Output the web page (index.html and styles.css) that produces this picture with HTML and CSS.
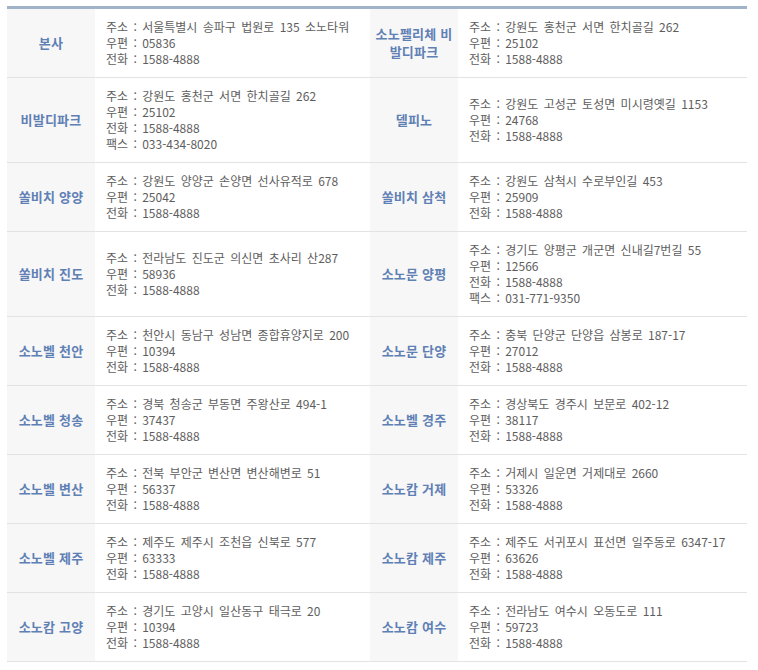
FILE: index.html
```html
<!DOCTYPE html>
<html lang="ko">
<head>
<meta charset="utf-8">
<title>사업장 안내</title>
<link rel="stylesheet" href="styles.css">
</head>
<body>
<div class="wrap">
<table class="sites">
  <colgroup>
    <col class="c-label"><col class="c-info1"><col class="c-label"><col class="c-info2">
  </colgroup>
  <tbody>
    <tr>
      <th>본사</th>
      <td>주소 : 서울특별시 송파구 법원로 135 소노타워<br>우편 : 05836<br>전화 : 1588-4888</td>
      <th>소노펠리체 비발디파크</th>
      <td>주소 : 강원도 홍천군 서면 한치골길 262<br>우편 : 25102<br>전화 : 1588-4888</td>
    </tr>
    <tr>
      <th>비발디파크</th>
      <td>주소 : 강원도 홍천군 서면 한치골길 262<br>우편 : 25102<br>전화 : 1588-4888<br>팩스 : 033-434-8020</td>
      <th>델피노</th>
      <td>주소 : 강원도 고성군 토성면 미시령옛길 1153<br>우편 : 24768<br>전화 : 1588-4888</td>
    </tr>
    <tr>
      <th>쏠비치 양양</th>
      <td>주소 : 강원도 양양군 손양면 선사유적로 678<br>우편 : 25042<br>전화 : 1588-4888</td>
      <th>쏠비치 삼척</th>
      <td>주소 : 강원도 삼척시 수로부인길 453<br>우편 : 25909<br>전화 : 1588-4888</td>
    </tr>
    <tr>
      <th>쏠비치 진도</th>
      <td>주소 : 전라남도 진도군 의신면 초사리 산287<br>우편 : 58936<br>전화 : 1588-4888</td>
      <th>소노문 양평</th>
      <td>주소 : 경기도 양평군 개군면 신내길7번길 55<br>우편 : 12566<br>전화 : 1588-4888<br>팩스 : 031-771-9350</td>
    </tr>
    <tr>
      <th>소노벨 천안</th>
      <td>주소 : 천안시 동남구 성남면 종합휴양지로 200<br>우편 : 10394<br>전화 : 1588-4888</td>
      <th>소노문 단양</th>
      <td>주소 : 충북 단양군 단양읍 삼봉로 187-17<br>우편 : 27012<br>전화 : 1588-4888</td>
    </tr>
    <tr>
      <th>소노벨 청송</th>
      <td>주소 : 경북 청송군 부동면 주왕산로 494-1<br>우편 : 37437<br>전화 : 1588-4888</td>
      <th>소노벨 경주</th>
      <td>주소 : 경상북도 경주시 보문로 402-12<br>우편 : 38117<br>전화 : 1588-4888</td>
    </tr>
    <tr>
      <th>소노벨 변산</th>
      <td>주소 : 전북 부안군 변산면 변산해변로 51<br>우편 : 56337<br>전화 : 1588-4888</td>
      <th>소노캄 거제</th>
      <td>주소 : 거제시 일운면 거제대로 2660<br>우편 : 53326<br>전화 : 1588-4888</td>
    </tr>
    <tr>
      <th>소노벨 제주</th>
      <td>주소 : 제주도 제주시 조천읍 신북로 577<br>우편 : 63333<br>전화 : 1588-4888</td>
      <th>소노캄 제주</th>
      <td>주소 : 제주도 서귀포시 표선면 일주동로 6347-17<br>우편 : 63626<br>전화 : 1588-4888</td>
    </tr>
    <tr>
      <th>소노캄 고양</th>
      <td>주소 : 경기도 고양시 일산동구 태극로 20<br>우편 : 10394<br>전화 : 1588-4888</td>
      <th>소노캄 여수</th>
      <td>주소 : 전라남도 여수시 오동도로 111<br>우편 : 59723<br>전화 : 1588-4888</td>
    </tr>
  </tbody>
</table>
</div>
</body>
</html>
```
FILE: styles.css
```css
html, body {
  margin: 0;
  padding: 0;
  background: #ffffff;
}
.wrap {
  padding: 6px 11px 0 7px;
}
.sites {
  width: 740px;
  border-collapse: collapse;
  border-top: 3px solid #a0b3c9;
  table-layout: fixed;
  font-family: "Noto Sans CJK KR", "Noto Sans", sans-serif;
}
.c-label { width: 88px; }
.c-info1 { width: 275px; }
.c-info2 { width: 289px; }
.sites th,
.sites td {
  border-bottom: 1px solid #e3e3e3;
  vertical-align: middle;
}
.sites th {
  background: #f7f7f7;
  color: #5f80b5;
  font-size: 13px;
  font-weight: bold;
  line-height: 18px;
  text-align: center;
  padding: 0 2px;
  letter-spacing: 0.2px;
}
.sites td {
  background: #ffffff;
  color: #5e5e5e;
  font-size: 12px;
  font-weight: normal;
  line-height: 16px;
  text-align: left;
  padding: 10px 8px 10px 11px;
  white-space: nowrap;
  word-spacing: 2px;
}
```
